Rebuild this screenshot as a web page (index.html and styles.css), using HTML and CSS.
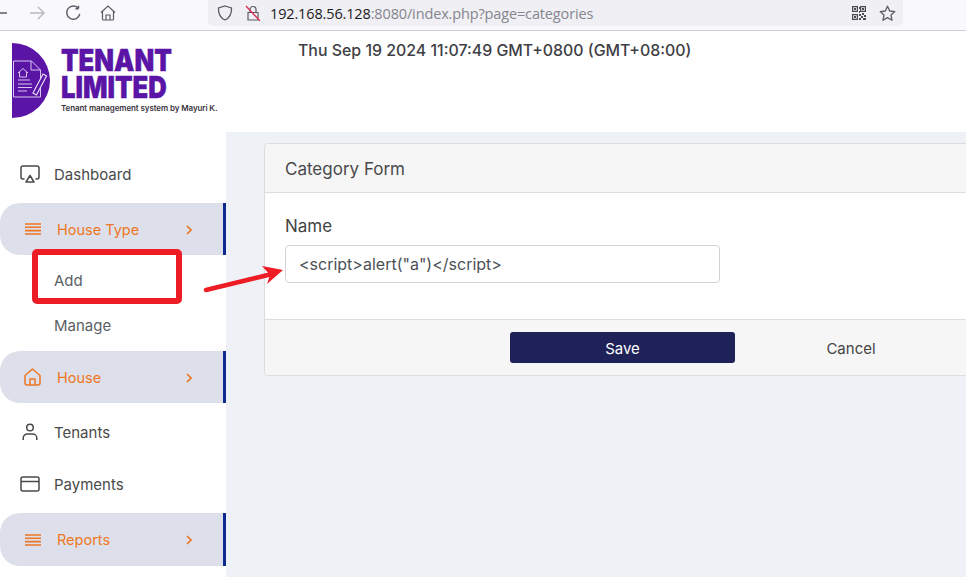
FILE: index.html
```html
<!DOCTYPE html>
<html lang="en">
<head>
<meta charset="utf-8">
<title>Tenant Limited</title>
<link rel="stylesheet" href="styles.css">
</head>
<body>
<div class="browser">
  <div class="nav">
    <svg class="ic back" width="8" height="16" viewBox="0 0 8 16"><path d="M0 8h7" stroke="#5b5b66" stroke-width="1.5" fill="none"/></svg>
    <svg class="ic fwd" width="16" height="16" viewBox="0 0 16 16"><path d="M1 8h14M9 2l6 6-6 6" stroke="#b9b9bf" stroke-width="1.4" fill="none"/></svg>
    <svg class="ic reload" width="16" height="16" viewBox="0 0 16 16"><path d="M13.5 3.5V.8M13.5 3.7h-3M13.6 3.6A6.6 6.6 0 1 0 14.8 9" stroke="#5b5b66" stroke-width="1.4" fill="none"/></svg>
    <svg class="ic home" width="16" height="16" viewBox="0 0 16 16"><path d="M1 7.5 8 1l7 6.500M2.500 6.500V14a1 1 0 0 0 1 1h9a1 1 0 0 0 1-1V6.500M6 15v-5h4v5" stroke="#5b5b66" stroke-width="1.2" fill="none"/></svg>
  </div>
  <div class="urlbar">
    <svg class="ic" width="16" height="16" viewBox="0 0 16 16"><path d="M8 1 14.500 3c.3 6-1.500 9.700-6.500 12C3 12.700 1.200 9 1.500 3z" stroke="#5b5b66" stroke-width="1.3" fill="none"/></svg>
    <svg class="ic lock" width="16" height="16" viewBox="0 0 16 16"><path d="M5 7V4.500a3 3 0 0 1 6 0V7M3 7.500h10V15H3z" stroke="#5b5b66" stroke-width="1.2" fill="none"/><path d="M1 1l14 15" stroke="#e22850" stroke-width="1.3"/></svg>
    <span class="url"><b>192.168.56.128</b>:8080/index.php?page=categories</span>
    <svg class="ic qr" width="15" height="15" viewBox="0 0 15 15"><path fill="#4a4a52" d="M0 0h6v6H0zM1.200 1.200v3.600h3.600V1.200zM8 0h6v6H8zM9.200 1.200v3.600h3.600V1.200zM0 8h6v6H0zM1.200 9.200v3.600h3.600V9.200zM2 2h2v2H2zM10 2h2v2h-2zM2 10h2v2H2zM7 1h1v2H7zM7 5h1v2H7zM7 8h2v2H7zM10 7h2v2h-2zM12 9h2v2h-2zM9 10h2v2H9zM7 12h2v2H7zM11 12h3v2h-3z" fill-rule="evenodd"/></svg>
    <svg class="ic star" width="17" height="17" viewBox="0 0 17 17"><path d="M8.500 1.200 10.700 6l5.100.6-3.800 3.500 1 5.100-4.500-2.600L4 15.200l1-5.100L1.200 6.600 6.300 6z" stroke="#5b5b66" stroke-width="1.300" fill="none" stroke-linejoin="round"/></svg>
  </div>
</div>

<header class="header">
  <div class="logo">
    <svg class="logo-mark" width="38" height="75" viewBox="0 0 38 75">
      <path d="M0 0a38 37.500 0 0 1 0 75z" fill="#5a14a6"/>
      <path d="M1.500 18h18l9 9v27h-27z" fill="none" stroke="#d9c6ee" stroke-width="1"/>
      <path d="M19 18v9h9" fill="none" stroke="#d9c6ee" stroke-width="1"/>
      <path d="M6 30l5-4.500 5 4.500M7.500 29v5h7v-5M6 37h12M6 41h14M6 44.500h14M6 48h9" fill="none" stroke="#d9c6ee" stroke-width="1"/>
      <path d="M21 50l10-19 3.500 2-10 19z" fill="#5a14a6" stroke="#e8dcf5" stroke-width="1.200"/>
    </svg>
    <div class="logo-text">
      <div class="logo-title">TENANT</div>
      <div class="logo-title">LIMITED</div>
      <div class="logo-tag">Tenant management system by Mayuri K.</div>
    </div>
  </div>
  <div class="clock">Thu Sep 19 2024 11:07:49 GMT+0800 (GMT+08:00)</div>
</header>

<div class="layout">
  <nav class="sidebar">
    <a class="item">
      <svg class="nav-ic" width="20" height="18" viewBox="0 0 20 18"><path d="M4.500 14H3a2 2 0 0 1-2-2V3a2 2 0 0 1 2-2h14a2 2 0 0 1 2 2v9a2 2 0 0 1-2 2h-1.500" fill="none" stroke="#4a4a4a" stroke-width="1.500"/><path d="M10 10.500 14 17H6z" fill="none" stroke="#4a4a4a" stroke-width="1.500" stroke-linejoin="round"/></svg>
      <span>Dashboard</span>
    </a>
    <a class="item active">
      <svg class="nav-ic" width="16" height="12" viewBox="0 0 16 12"><path d="M0 1h16M0 4.300h16M0 7.600h16M0 11h16" stroke="#ee7623" stroke-width="1.600"/></svg>
      <span>House Type</span>
      <svg class="chev" width="6" height="10" viewBox="0 0 6 10"><path d="M1 1l4 4-4 4" stroke="#ee7623" stroke-width="1.600" fill="none"/></svg>
    </a>
    <div class="submenu">
      <a class="subitem">Add</a>
      <a class="subitem">Manage</a>
    </div>
    <a class="item active flush">
      <svg class="nav-ic wide" width="17" height="18" viewBox="0 0 17 18"><path d="M1 7.500 8.500 1 16 7.500V15a2 2 0 0 1-2 2H3a2 2 0 0 1-2-2zM6 17v-6h5v6" fill="none" stroke="#ee7623" stroke-width="1.500" stroke-linejoin="round"/></svg>
      <span>House</span>
      <svg class="chev" width="6" height="10" viewBox="0 0 6 10"><path d="M1 1l4 4-4 4" stroke="#ee7623" stroke-width="1.600" fill="none"/></svg>
    </a>
    <a class="item">
      <svg class="nav-ic" width="20" height="18" viewBox="0 0 20 18"><circle cx="10" cy="4.500" r="3.300" fill="none" stroke="#4a4a4a" stroke-width="1.500"/><path d="M3.200 17v-2a4 4 0 0 1 4-4h5.600a4 4 0 0 1 4 4v2" fill="none" stroke="#4a4a4a" stroke-width="1.500"/></svg>
      <span>Tenants</span>
    </a>
    <a class="item flush">
      <svg class="nav-ic" width="20" height="16" viewBox="0 0 20 16"><rect x="1" y="1" width="18" height="14" rx="2" fill="none" stroke="#4a4a4a" stroke-width="1.500"/><path d="M1 5.500h18" stroke="#4a4a4a" stroke-width="1.500"/></svg>
      <span>Payments</span>
    </a>
    <a class="item active tall">
      <svg class="nav-ic" width="16" height="12" viewBox="0 0 16 12"><path d="M0 1h16M0 4.300h16M0 7.600h16M0 11h16" stroke="#ee7623" stroke-width="1.600"/></svg>
      <span>Reports</span>
      <svg class="chev" width="6" height="10" viewBox="0 0 6 10"><path d="M1 1l4 4-4 4" stroke="#ee7623" stroke-width="1.600" fill="none"/></svg>
    </a>
  </nav>

  <main class="main">
    <section class="card">
      <div class="card-head">Category Form</div>
      <div class="card-body">
        <label class="label">Name</label>
        <div class="input">&lt;script&gt;alert("a")&lt;/script&gt;</div>
      </div>
      <div class="card-foot">
        <button class="btn save">Save</button>
        <button class="btn cancel">Cancel</button>
      </div>
    </section>
  </main>
</div>

<svg class="annot" width="290" height="70" viewBox="0 0 290 70">
  <rect x="3" y="3" width="144" height="49" rx="2" fill="none" stroke="#ee1c25" stroke-width="6"/>
  <path d="M174 41 238 25.500" stroke="#ee1c25" stroke-width="4.500" stroke-linecap="round"/>
  <path d="M251 21 230 17 238 26 235 35z" fill="#ee1c25"/>
</svg>
</body>
</html>
```
FILE: styles.css
```css
* { box-sizing: border-box; }
html, body { margin: 0; height: 100%; overflow: hidden; }
body { position: relative; background: #fff; font-family: "Inter", "Liberation Sans", sans-serif; color: #444; width: 966px; height: 577px; }

.browser { height: 31px; background: #f9f9fb; border-bottom: 1px solid #cfcfd8; display: flex; align-items: flex-start; }
.ic { display: block; flex: none; }
.nav { width: 208px; height: 26px; display: flex; align-items: center; flex: none; }
.back { margin-right: 21px; }
.fwd { margin-right: 20px; }
.reload { margin-right: 19px; }
.urlbar { width: 695px; height: 26px; background: #f0f0f4; border-radius: 0 0 5px 5px; display: flex; align-items: center; padding-left: 9px; }
.lock { margin-left: 12px; }
.url { margin-left: 9px; font-family: "Open Sans", "Liberation Sans", sans-serif; font-size: 14.500px; color: #85858e; letter-spacing: -0.14px; white-space: nowrap; }
.url b { font-weight: 400; color: #1c1b22; }
.qr { margin-left: 259px; }
.star { margin-left: 12px; }

.header { height: 101px; display: flex; align-items: flex-start; }
.logo { width: 298px; padding: 12px 0 0 12px; display: flex; flex: none; }
.logo-text { margin-left: 11px; padding-top: 4px; color: #5a14a6; }
.logo-title { font-weight: 900; font-size: 29.500px; line-height: 27px; transform: scaleX(0.87); transform-origin: left center; -webkit-text-stroke: 0.4px #5a14a6; }
.logo-tag { font-size: 8px; font-weight: 600; color: #3b3440; margin-top: 2px; white-space: nowrap; letter-spacing: -0.1px; }
.clock { margin-top: 10px; font-size: 15.900px; font-weight: 500; color: #3e3e45; white-space: nowrap; }

.layout { display: flex; height: 445px; }
.sidebar { width: 226px; flex: none; padding-top: 16px; background: #fff; }
.item { height: 52px; display: flex; align-items: center; padding-left: 20px; font-size: 15px; color: #4a4a4a; margin-top: 3px; }
.item:first-child { margin-top: 0; }
.item span { margin-left: 14px; }
.item.flush { margin-top: 0; }
.item.tall { height: 53px; margin-top: 3px; }
.item.active { background: #dde0ea; color: #ee7623; border-right: 3px solid #0f2a8f; border-radius: 20px 0 0 20px; padding-left: 25px; font-size: 14.500px; }
.item.active span { margin-left: 16px; flex: 1; }
.item.active .wide { margin-left: -1px; margin-right: 0; }
.chev { margin-right: 31px; margin-top: 1px; flex: none; }
.submenu { height: 96px; padding-top: 3px; display: flex; flex-direction: column; }
.subitem { height: 45px; line-height: 45px; padding-left: 54px; font-size: 15px; color: #5c5f66; }

.main { flex: 1; background: #eef1f5; padding: 11px 0 0 38px; overflow: hidden; min-width: 0; }
.card { width: 740px; height: 233px; background: #fff; border: 1px solid #dcdde1; border-radius: 4px; display: flex; flex-direction: column; }
.card-head { height: 49px; flex: none; background: #f6f6f7; border-bottom: 1px solid #dcdde1; padding-left: 20px; line-height: 50px; font-size: 17px; color: #4a4a4a; border-radius: 4px 4px 0 0; }
.card-body { height: 126px; flex: none; padding: 22px 0 0 20px; }
.label { display: block; font-size: 17px; line-height: 22px; color: #444; }
.input { width: 435px; height: 38px; margin-top: 8px; border: 1px solid #d0d3da; border-radius: 4px; padding-left: 13px; line-height: 36px; font-size: 16px; color: #4d5157; }
.card-foot { flex: 1; background: #f6f6f7; border-top: 1px solid #dcdde1; padding: 12px 0 0 245px; display: flex; border-radius: 0 0 4px 4px; }
.btn { height: 31px; border: 0; font-family: inherit; font-size: 15px; border-radius: 3px; padding: 1px 0 0; }
.save { width: 225px; background: #1e2259; color: #fff; }
.cancel { width: 232px; background: transparent; color: #444; }

.annot { position: absolute; left: 32px; top: 249px; overflow: visible; }
```
